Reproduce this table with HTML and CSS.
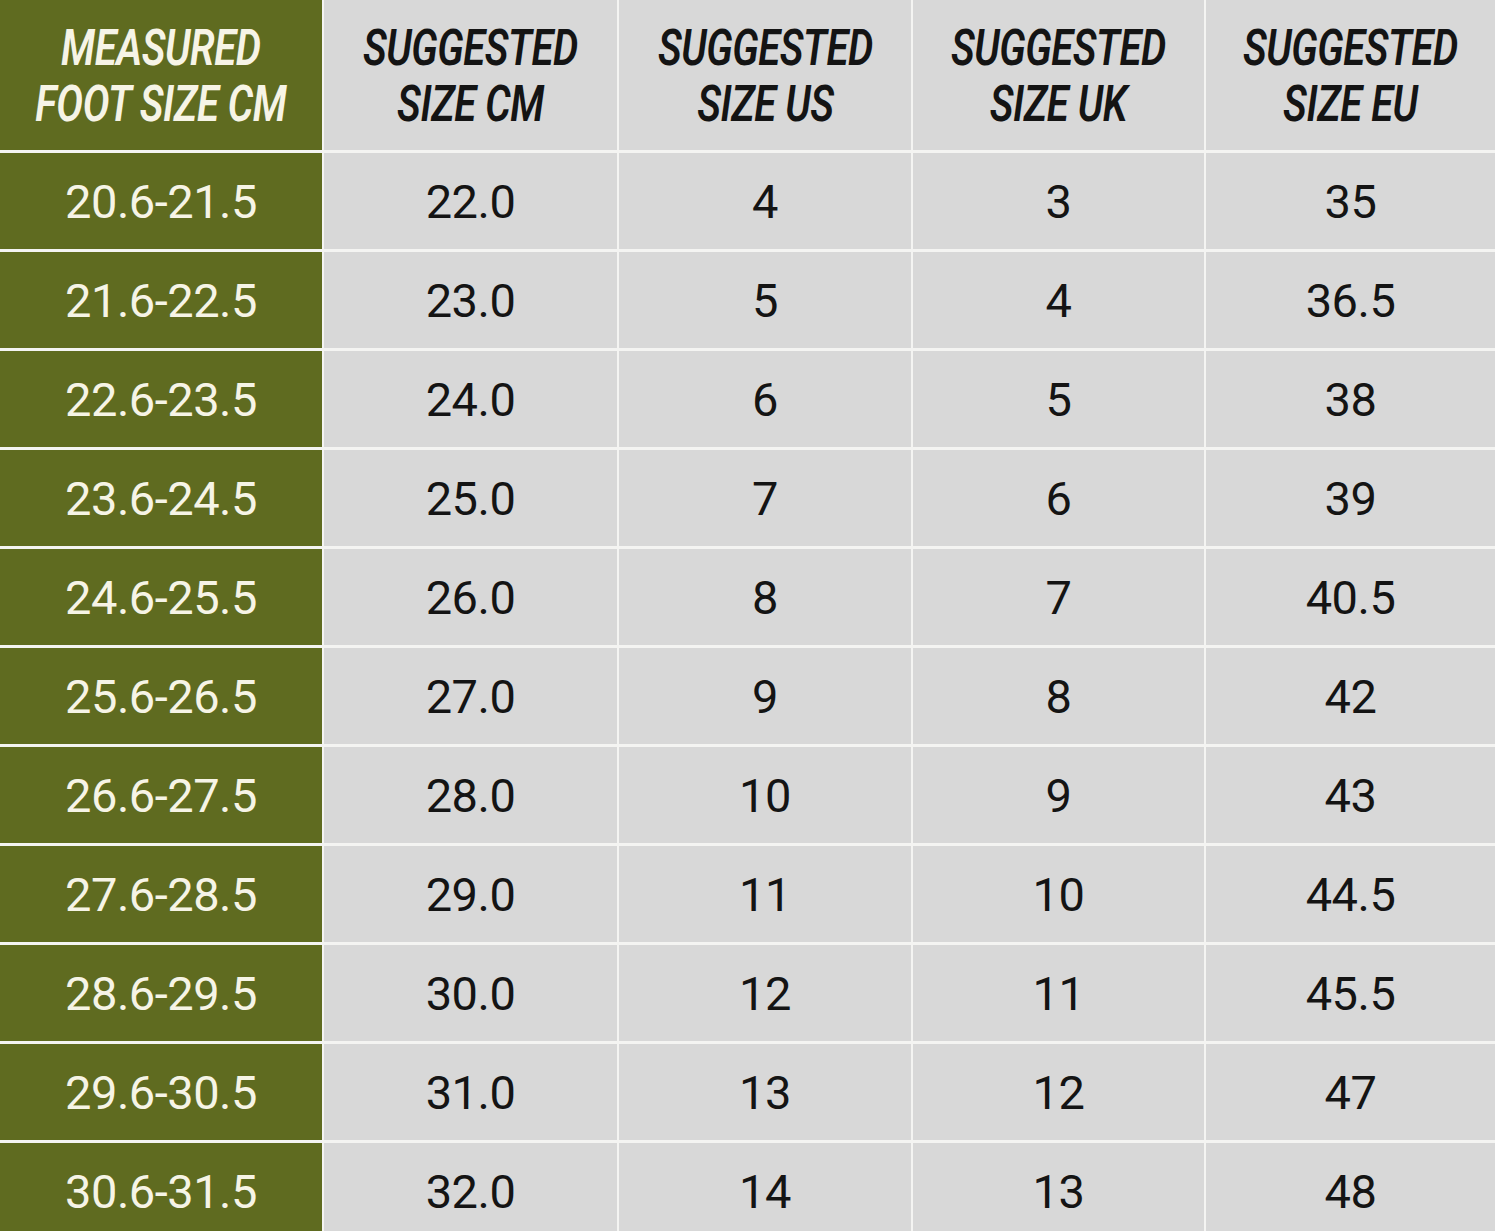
FILE: index.html
```html
<!DOCTYPE html>
<html>
<head>
<meta charset="utf-8">
<link rel="stylesheet" href="styles.css">
</head>
<body>
<div class="chart">
  <div class="cell head first"><span class="label">MEASURED<br>FOOT SIZE CM</span></div>
  <div class="cell head"><span class="label">SUGGESTED<br>SIZE CM</span></div>
  <div class="cell head"><span class="label">SUGGESTED<br>SIZE US</span></div>
  <div class="cell head"><span class="label">SUGGESTED<br>SIZE UK</span></div>
  <div class="cell head"><span class="label">SUGGESTED<br>SIZE EU</span></div>

  <div class="cell first">20.6-21.5</div><div class="cell">22.0</div><div class="cell">4</div><div class="cell">3</div><div class="cell">35</div>
  <div class="cell first">21.6-22.5</div><div class="cell">23.0</div><div class="cell">5</div><div class="cell">4</div><div class="cell">36.5</div>
  <div class="cell first">22.6-23.5</div><div class="cell">24.0</div><div class="cell">6</div><div class="cell">5</div><div class="cell">38</div>
  <div class="cell first">23.6-24.5</div><div class="cell">25.0</div><div class="cell">7</div><div class="cell">6</div><div class="cell">39</div>
  <div class="cell first">24.6-25.5</div><div class="cell">26.0</div><div class="cell">8</div><div class="cell">7</div><div class="cell">40.5</div>
  <div class="cell first">25.6-26.5</div><div class="cell">27.0</div><div class="cell">9</div><div class="cell">8</div><div class="cell">42</div>
  <div class="cell first">26.6-27.5</div><div class="cell">28.0</div><div class="cell">10</div><div class="cell">9</div><div class="cell">43</div>
  <div class="cell first">27.6-28.5</div><div class="cell">29.0</div><div class="cell">11</div><div class="cell">10</div><div class="cell">44.5</div>
  <div class="cell first">28.6-29.5</div><div class="cell">30.0</div><div class="cell">12</div><div class="cell">11</div><div class="cell">45.5</div>
  <div class="cell first">29.6-30.5</div><div class="cell">31.0</div><div class="cell">13</div><div class="cell">12</div><div class="cell">47</div>
  <div class="cell first">30.6-31.5</div><div class="cell">32.0</div><div class="cell">14</div><div class="cell">13</div><div class="cell">48</div>
</div>
</body>
</html>
```
FILE: styles.css
```css
html, body {
  margin: 0;
  padding: 0;
  background: #ffffff;
}
body {
  overflow: hidden;
}
.chart {
  display: grid;
  grid-template-columns: 322px 293px 292px 291px 1fr;
  grid-template-rows: 150px repeat(11, 96px);
  gap: 3px 2px;
  background: #f4f4f2;
  width: 1495px;
}
.cell {
  background: #d8d8d8;
  color: #141414;
  display: flex;
  align-items: center;
  justify-content: center;
  text-align: center;
  font-family: Roboto, "DejaVu Sans", sans-serif;
  font-size: 47px;
  font-weight: 400;
  letter-spacing: -0.5px;
}
.cell.first {
  background: #5f6b20;
  color: #f6f4e6;
}
.cell.head {
  font-family: Roboto, "DejaVu Sans", sans-serif;
  font-style: italic;
  font-weight: 600;
  font-size: 50px;
  line-height: 56px;
  letter-spacing: -0.5px;
  padding-top: 2px;
}
.label {
  display: inline-block;
  white-space: nowrap;
  transform: scaleX(0.8);
}
```
